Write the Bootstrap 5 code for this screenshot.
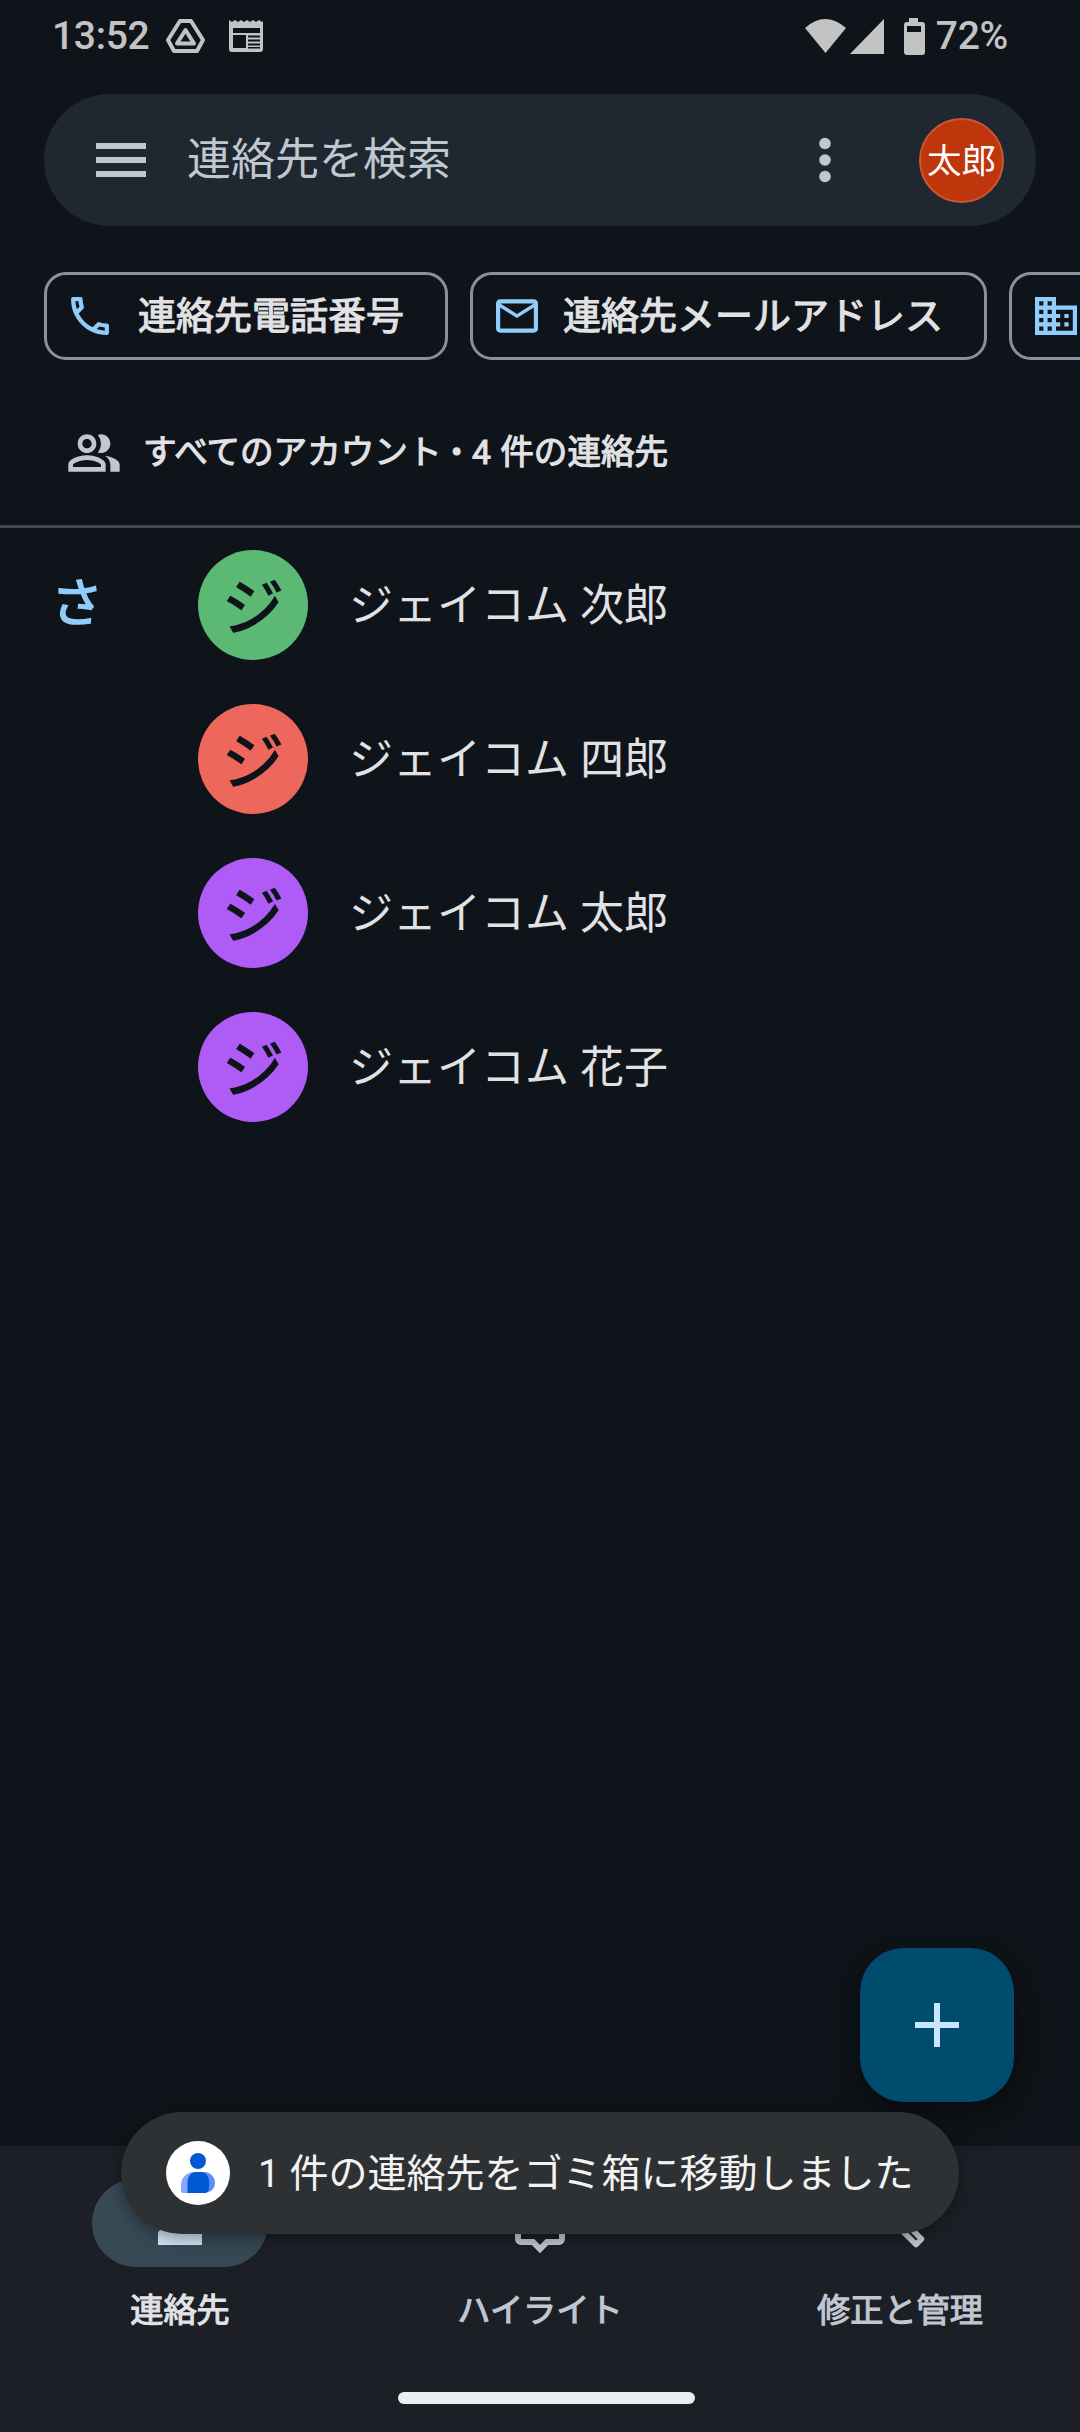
<!DOCTYPE html>
<html lang="ja" data-bs-theme="dark">
<head>
<meta charset="utf-8">
<meta name="viewport" content="width=device-width, initial-scale=1">
<title>連絡先</title>
<link href="https://cdn.jsdelivr.net/npm/bootstrap@5.3.0/dist/css/bootstrap.min.css" rel="stylesheet">
<style>
body{background:#0f141a;color:#e2e2e5;font-family:Roboto,"Noto Sans CJK JP",sans-serif;margin:0;overflow:hidden}
svg{display:block;flex:none}
.phone{width:1080px;height:2432px;overflow:hidden}
.medium{font-weight:400;-webkit-text-stroke:1.1px currentColor}
.status{height:94px;padding:0 72px 22px 52px;color:#c3c3c3;font-size:39px;font-weight:500;line-height:72px;letter-spacing:-.3px}
.drive{margin-left:17px}
.news{margin-left:23px}
.level{margin-left:9px}
.search{height:132px;margin:0 44px;padding:0 32px 0 52px;border-radius:66px;background:#1f2830;color:#c1c7d0;font-size:44px;line-height:132px}
.search-text{padding-left:41px}
.me{width:85px;height:85px;margin-left:88px;border:2px solid #cb5732;background:#bf360c;color:#fff;font-size:34.5px;line-height:82px}
.chips{margin:46px 0 0 44px;gap:22px}
.chip{height:88px;border:3px solid #8b9199;border-radius:22px;padding:0 41px 0 23px;font-size:38px;white-space:nowrap}
.chip svg{margin-right:25px}
.chip .call{margin:0 28px 0 0}
.accounts{height:165px;padding:21px 0 0 66px;font-size:33.6px;word-spacing:1.2px}
.accounts svg{margin-right:21px}
.rule{height:3px;background:#43474e}
.people{padding-top:22px}
.person{height:154px;padding-bottom:44px;font-size:44px}
.person-name{padding-top:2px}
.letter{width:198px;padding-left:51px;color:#91cdfb;font-size:52px;line-height:60px;-webkit-text-stroke-width:1.6px}
.face{width:110px;height:110px;color:#0f141a;font-size:62px;line-height:117px;margin-right:41px;-webkit-text-stroke-width:1.4px}
.c-green{background:#5bb974}.c-red{background:#ee675c}.c-purple{background:#af5cf7}
.tabs{height:286px;background:#1c1f26;color:#c1c7d0;font-size:33.2px;padding-top:33px}
.tab-i{height:88px;width:176px;border-radius:44px}
.tab-i.on{background:#374955;color:#d3e5f5}
.tab-t{line-height:40px;margin-top:24px}
.tab-t.on{color:#e2e2e5}
.home{width:297px;height:12px;border-radius:6px;background:#ecedee;left:398px;top:2392px}
.fab{left:860px;top:1948px;width:154px;height:154px;border-radius:44px;background:#004c6e;box-shadow:0 8px 18px rgba(0,0,0,.35),4px 12px 32px rgba(14,18,16,.7)}
.snack{left:121px;top:2112px;width:838px;height:122px;border-radius:61px;background:#2e3133;color:#f2f2f2;font-size:39px;box-shadow:0 5px 16px rgba(0,0,0,.35);padding-left:45px;white-space:nowrap}
.snack span{margin:3px 0 0 28px}
</style>
</head>
<body>
<div class="phone position-relative d-flex flex-column">
  <header class="status d-flex align-items-center flex-shrink-0">
    <span>13:52</span>
    <svg class="drive" width="39" height="36" viewBox="0 0 39 36" fill="none" stroke="#c3c3c3" stroke-width="4" stroke-linejoin="round"><path d="M14 3h11l12 19-6 11H8L2 22z"/><path d="M19.500 12L28 25.500H11z"/></svg>
    <svg class="news" width="36" height="34" viewBox="0 0 36 34"><path fill="#c3c3c3" fill-rule="evenodd" d="M1 1l3 2 3-2 3 2 3-2 3 2 3-2 3 2 3-2 3 2 3-2 3 2 1-1v28a3 3 0 0 1-3 3H4a3 3 0 0 1-3-3zM5 9v5h27V9zM5 16v13h13V16zM20 16.500v2h12v-2zM20 20.500v2h12v-2zM20 24.500v2h12v-2zM20 28v1.500h12V28z"/></svg>
    <div class="ms-auto d-flex align-items-center">
      <svg width="123" height="38" viewBox="0 0 123 38" fill="#c3c3c3"><path d="M1 11Q21-7 42 11L21.500 36zM46 37L80 2v35z"/><path fill-rule="evenodd" d="M105 1h9v4h4a3 3 0 0 1 3 3v27a3 3 0 0 1-3 3h-15a3 3 0 0 1-3-3V8a3 3 0 0 1 3-3h2zM103 9v6h14V9z"/></svg>
      <span class="level">72%</span>
    </div>
  </header>
  <div class="search d-flex align-items-center flex-shrink-0">
    <svg width="50" height="34" viewBox="0 0 50 34" fill="#c1c7d0"><path d="M0 0h50v6H0zM0 14h50v6H0zM0 28h50v6H0z"/></svg>
    <span class="search-text">連絡先を検索</span>
    <svg class="ms-auto" width="12" height="46" viewBox="0 0 12 46" fill="#c1c7d0"><circle cx="6" cy="6.500" r="5.800"/><circle cx="6" cy="23" r="5.800"/><circle cx="6" cy="39.500" r="5.800"/></svg>
    <div class="me rounded-circle text-center">太郎</div>
  </div>
  <div class="chips d-flex flex-shrink-0">
    <div class="chip medium d-flex align-items-center flex-shrink-0"><svg class="call" width="40" height="40" viewBox="2.500 2.500 19 19" fill="#91cdfb"><path d="M6.540 5c.06.89.21 1.760.45 2.590l-1.200 1.200c-.41-1.200-.67-2.470-.76-3.790h1.510m9.860 12.020c.85.24 1.720.39 2.600.45v1.490c-1.320-.09-2.590-.35-3.800-.75l1.200-1.190M7.500 3H4c-.55 0-1 .45-1 1 0 9.390 7.610 17 17 17 .55 0 1-.45 1-1v-3.490c0-.55-.45-1-1-1-1.240 0-2.450-.2-3.570-.57a.84.84 0 0 0-.31-.05c-.26 0-.51.1-.71.29l-2.200 2.200a15.150 15.150 0 0 1-6.590-6.590l2.200-2.200c.28-.28.36-.67.25-1.020A11.360 11.360 0 0 1 8.500 4c0-.55-.45-1-1-1z"/></svg>連絡先電話番号</div>
    <div class="chip medium d-flex align-items-center flex-shrink-0"><svg width="42" height="34" viewBox="2 4 20 16" fill="#91cdfb"><path d="M22 6c0-1.100-.9-2-2-2H4c-1.100 0-2 .9-2 2v12c0 1.100.9 2 2 2h16c1.100 0 2-.9 2-2V6zm-2 0l-8 5-8-5h16zm0 12H4V8l8 5 8-5v10z"/></svg>連絡先メールアドレス</div>
    <div class="chip d-flex align-items-center flex-shrink-0"><svg width="42" height="38" viewBox="2 3 20 18" fill="#91cdfb"><path d="M12 7V3H2v18h20V7H12zM6 19H4v-2h2v2zm0-4H4v-2h2v2zm0-4H4V9h2v2zm0-4H4V5h2v2zm4 12H8v-2h2v2zm0-4H8v-2h2v2zm0-4H8V9h2v2zm0-4H8V5h2v2zm10 12h-8v-2h2v-2h-2v-2h2v-2h-2V9h8v10zm-2-8h-2v2h2v-2zm0 4h-2v2h2v-2z"/></svg></div>
  </div>
  <div class="accounts medium d-flex align-items-center flex-shrink-0">
    <svg width="56" height="56" viewBox="0 0 24 24" fill="#c1c7d0"><path d="M16.670 13.130C18.040 14.060 19 15.320 19 17v3h4v-3c0-2.180-3.570-3.470-6.330-3.870zM15 12c2.210 0 4-1.790 4-4s-1.790-4-4-4c-.47 0-.91.1-1.330.24a5.980 5.980 0 0 1 0 7.520c.42.14.86.24 1.330.24zM9 12c2.210 0 4-1.790 4-4s-1.790-4-4-4-4 1.790-4 4 1.790 4 4 4zm0-6c1.100 0 2 .9 2 2s-.9 2-2 2-2-.9-2-2 .9-2 2-2zM9 13c-2.670 0-8 1.340-8 4v3h16v-3c0-2.660-5.330-4-8-4zm6 5H3v-.99C3.200 16.290 6.300 15 9 15s5.800 1.290 6 2v1z"/></svg>
    <span>すべてのアカウント • 4 件の連絡先</span>
  </div>
  <div class="rule flex-shrink-0"></div>
  <main class="people flex-grow-1">
    <div class="person d-flex align-items-center"><div class="letter medium">さ</div><div class="face c-green rounded-circle text-center medium">ジ</div><span class="person-name">ジェイコム 次郎</span></div>
    <div class="person d-flex align-items-center"><div class="letter"></div><div class="face c-red rounded-circle text-center medium">ジ</div><span class="person-name">ジェイコム 四郎</span></div>
    <div class="person d-flex align-items-center"><div class="letter"></div><div class="face c-purple rounded-circle text-center medium">ジ</div><span class="person-name">ジェイコム 太郎</span></div>
    <div class="person d-flex align-items-center"><div class="letter"></div><div class="face c-purple rounded-circle text-center medium">ジ</div><span class="person-name">ジェイコム 花子</span></div>
  </main>
  <nav class="tabs medium d-flex flex-shrink-0">
    <div class="col-4 d-flex flex-column align-items-center"><div class="tab-i on d-flex align-items-center justify-content-center"><svg width="66" height="66" viewBox="0 0 24 24" fill="currentColor"><path d="M12 11c2.210 0 4-1.790 4-4s-1.790-4-4-4-4 1.790-4 4 1.790 4 4 4zM12 12.500c-2.670 0-8 1-8 3.500v4h16v-4c0-2.500-5.330-3.500-8-3.500z"/></svg></div><div class="tab-t on">連絡先</div></div>
    <div class="col-4 d-flex flex-column align-items-center"><div class="tab-i d-flex align-items-center justify-content-center"><svg width="66" height="66" viewBox="0 0 66 66" fill="none" stroke="currentColor" stroke-width="6"><path d="M14 8h38a3 3 0 0 1 3 3v38a3 3 0 0 1-3 3H40l-7 7-7-7H14a3 3 0 0 1-3-3V11a3 3 0 0 1 3-3z"/></svg></div><div class="tab-t">ハイライト</div></div>
    <div class="col-4 d-flex flex-column align-items-center"><div class="tab-i d-flex align-items-center justify-content-center"><svg width="66" height="66" viewBox="0 0 66 66" fill="none" stroke="currentColor" stroke-width="5.500" stroke-linejoin="round"><path d="M20 25.500L49 54.500l5.500-5.500-29-29z"/></svg></div><div class="tab-t">修正と管理</div></div>
  </nav>
  <div class="fab position-absolute d-flex align-items-center justify-content-center"><svg width="44" height="44" viewBox="0 0 44 44" fill="#c9e6ff"><path d="M19 0h6v19h19v6H25v19h-6V25H0v-6h19z"/></svg></div>
  <div class="snack position-absolute d-flex align-items-center">
    <svg width="64" height="64" viewBox="0 0 64 64"><circle cx="32" cy="32" r="32" fill="#fff"/><circle cx="32" cy="20" r="8" fill="#0059d0"/><path d="M15 50v-6a13 13 0 0 1 13-13h9v21H17a2 2 0 0 1-2-2z" fill="#86a9ff"/><path d="M27 31h11a11 11 0 0 1 11 11a10 10 0 0 1-10 10H27z" fill="#5a8dff"/><path d="M21.500 52V41c0-6 4-10 9-10h4c5 0 8.500 4 8.500 9v6c0 4-2 6-5 6z" fill="#0059d0"/></svg>
    <span>1 件の連絡先をゴミ箱に移動しました</span>
  </div>
  <div class="home position-absolute"></div>
</div>
<script src="https://cdn.jsdelivr.net/npm/bootstrap@5.3.0/dist/js/bootstrap.bundle.min.js"></script>
</body>
</html>
